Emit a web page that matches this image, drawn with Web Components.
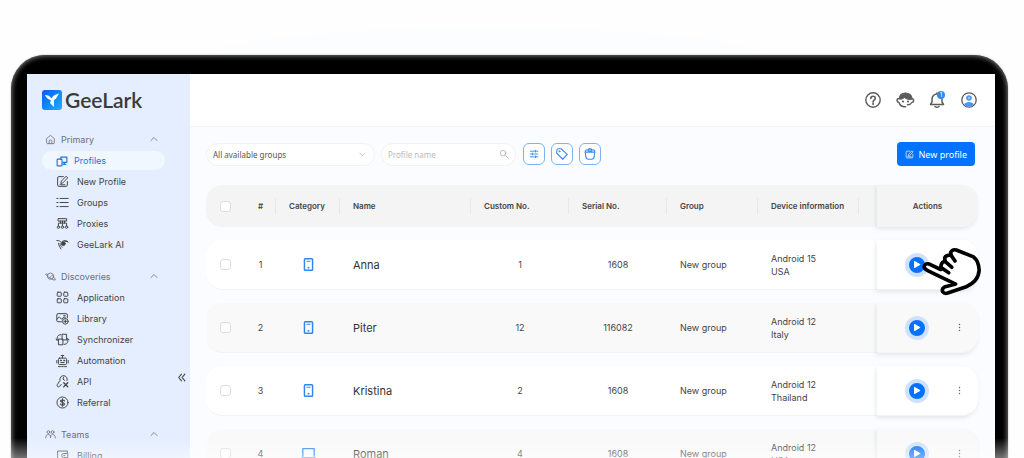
<!DOCTYPE html>
<html lang="en">
<head>
<meta charset="utf-8">
<title>GeeLark</title>
<style>
html, body { margin: 0; height: 100%; }
body { overflow: hidden; background: #fefefe; font-family: Inter, Roboto, sans-serif; font-size: 9px; color: #444; }
</style>
</head>
<body>
<gl-device>
  <gl-sidebar slot="side">
    <gl-section icon="home" label="Primary">
      <gl-link icon="profiles" active>Profiles</gl-link>
      <gl-link icon="edit">New Profile</gl-link>
      <gl-link icon="list">Groups</gl-link>
      <gl-link icon="proxy">Proxies</gl-link>
      <gl-link icon="bird">GeeLark AI</gl-link>
    </gl-section>
    <gl-section icon="planet" label="Discoveries">
      <gl-link icon="grid">Application</gl-link>
      <gl-link icon="library">Library</gl-link>
      <gl-link icon="sync">Synchronizer</gl-link>
      <gl-link icon="robot">Automation</gl-link>
      <gl-link icon="api">API</gl-link>
      <gl-link icon="dollar">Referral</gl-link>
    </gl-section>
    <gl-section icon="team" label="Teams">
      <gl-link icon="wallet">Billing</gl-link>
    </gl-section>
  </gl-sidebar>
  <gl-topbar></gl-topbar>
  <gl-toolbar></gl-toolbar>
  <gl-profiles></gl-profiles>
</gl-device>

<script>
const icons = {
  home: '<path d="M2.5 6.5 8 2l5.500 4.500V13a1 1 0 0 1-1 1h-9a1 1 0 0 1-1-1zM6 14v-3.500a2 2 0 0 1 4 0V14"/>',
  profiles: '<path stroke-width="1.500" d="M6.500 6V2.800h8v7H9M11 10v2.500M9 12.500h4"/><rect stroke-width="1.500" x="1.500" y="5.500" width="6.500" height="9" rx="1"/>',
  edit: '<path d="M9 2H3.500A1.500 1.500 0 0 0 2 3.500v9A1.500 1.500 0 0 0 3.500 14h9a1.500 1.500 0 0 0 1.500-1.500V8M6 10l.5-2.500L12.500 1.500l2 2L8.500 9.500zM5 12h6"/>',
  list: '<path d="M5 3h10M5 8h10M5 13h10M1 3h1.500M1 8h1.500M1 13h1.500"/>',
  proxy: '<path d="M3 2h10v3H3zM8 5v6M3 11V7.500h10V11M5.500 5v2.500M10.500 5v2.500"/><circle cx="3" cy="12.500" r="1.500"/><circle cx="8" cy="12.500" r="1.500"/><circle cx="13" cy="12.500" r="1.500"/>',
  bird: '<path d="M1 3c3 0 4.500 1 5.500 2.500C9 2.500 13 2.500 15 5c-2-1-3.500-1-4.500-.5M3 6.500C3 9 5 11 6 13.500M5 7c0 2 1 3 2.500 4.500"/><circle cx="9" cy="7" r="2.300" fill="currentColor"/>',
  planet: '<circle cx="8" cy="7.500" r="4.500"/><path d="M4 5C0 3 0 5 4 8s9 6 11 5c1-1-1-3-3-4M7 9.500l4-4"/>',
  grid: '<rect x="1.500" y="1.500" width="5" height="5" rx="1"/><rect x="9.500" y="1.500" width="5" height="5" rx="1"/><rect x="1.500" y="9.500" width="5" height="5" rx="1"/><rect x="9.500" y="9.500" width="5" height="5" rx="1"/>',
  library: '<path d="M7 12H2.500A1.500 1.500 0 0 1 1 10.500v-7A1.500 1.500 0 0 1 2.500 2h10A1.500 1.500 0 0 1 14 3.500V7M1 9l3-3 3 3 3-3 2 1.500M9.500 4.500h2"/><circle cx="11.500" cy="11.500" r="3.500"/><path d="M11.500 9.800v3.400M9.800 11.500h3.400"/>',
  sync: '<rect x="8" y="1.500" width="5" height="7"/><rect x="3.500" y="7.500" width="5" height="7"/><path d="M6 2C2 2 1 5 1.500 9L0 7.500M1.500 9 3 7.500M10 14c4 0 5-3 4.500-7L13 8.500M14.500 7 16 8.500"/>',
  robot: '<rect x="3" y="5" width="10" height="8" rx="1.500"/><path d="M8 5V2M6.500 1.800h3M1 8v3M15 8v3M6 10.500h4M3 15.500h2.500M7 15.500h2M10.500 15.500H13"/><circle cx="6" cy="8" r=".7"/><circle cx="10" cy="8" r=".7"/>',
  api: '<path d="M13.500 7A4.500 4.500 0 1 0 5 6.500L1.500 12c-.8 2 1.500 3.500 3 2l2-2.500M9.500 2.500 8.500 5 10.500 6.500"/><path stroke-width="1.600" d="m9.500 9.500 5 5M14.500 9.500l-5 5"/>',
  dollar: '<circle cx="8" cy="8" r="6.800"/><path stroke-width="1.500" d="M10.500 6c-.5-1.500-5-1.500-5 .3S10.500 8 10.500 9.800s-4.500 2-5 .2M8 3.500v9"/>',
  team: '<circle cx="5" cy="4.500" r="2"/><circle cx="11" cy="4.500" r="2"/><path d="M1 13c0-3 1.500-5 4-5s3 2 3 5c0-3 .5-5 3-5s4 2 4 5"/>',
  wallet: '<path d="M14 5V2.500H2v11.500h12v-3M14 5.500H9.500a2.500 2.500 0 0 0 0 5H14z"/><circle cx="10" cy="8" r=".5"/>',
  up: '<path stroke-width="1.600" d="m2 11 6-6 6 6"/>',
  down: '<path stroke-width="1.500" d="m2 5 6 6 6-6"/>',
  collapse: '<path stroke-width="2" d="M8 2 3 8l5 6M14 2 9 8l5 6"/>',
  search: '<circle cx="6.500" cy="6.500" r="4.500"/><path d="m10 10 5 5"/>',
  sliders: '<path stroke-width="1.500" d="M2 3.500h12M2 8h12M2 12.500h12M10.500 2v3M5.500 6.500v3M10.500 11v3"/>',
  tag: '<path stroke-width="1.500" d="M1 3.500Q1 1 3.500 1H7l8 7.500-6 6.500-8-8z"/><circle cx="4.500" cy="4.500" r=".8"/>',
  bucket: '<path stroke-width="1.500" d="M1.500 5.500h13l-1 6.500c-.5 2-1.500 3-3 3h-5c-1.500 0-2.500-1-3-3zM1.500 5.500C1.500 3 4 1.500 5.500 3 6 0 10 0 10.500 3c1.500-1.500 4 0 4 2.500M8 2v3M5.500 3l1.500 2.500M10.500 3 9 5.500"/>',
  help: '<circle cx="8" cy="8" r="7.200" stroke-width="1.400"/><path stroke-width="1.600" d="M5.800 6.500c0-3 4.500-3 4.500-.3 0 1.600-2.200 1.700-2.200 3.500M8.100 11v1.400"/>',
  agent: '<path fill="currentColor" d="M2.500 7C2 3 5 1 8.500 1S15 3 15 7l-1.500.5C11 7.500 9 7 7.500 5 6.500 6.500 5 7.500 2.500 7z"/><path stroke-width="1.500" d="M1.800 6.500C-.8 7-.2 10.500 2 10.500c1 3 3.500 4.500 6.500 4.300M15 6.500c2.500.5 2 4-.2 4-.8 1.500-2 2.300-4.300 2.300"/><circle cx="6" cy="9.500" r=".5"/><circle cx="11" cy="9.500" r=".5"/>',
  bell: '<path stroke-width="1.500" d="M1.500 12.500h13L13 10V7a5 5 0 0 0-10 0v3zM6 14.500q2 1.500 4 0M8 2V1"/>',
  user: '<circle cx="8" cy="8" r="7.200" stroke-width="1.300"/><g fill="#4c98ee" stroke="none"><circle cx="8" cy="6" r="2.800"/><path d="M3 12.500c1.500-3.500 8.500-3.500 10 0-2.500 2.700-7.500 2.700-10 0z"/></g><circle cx="8" cy="6" r=".8" fill="#fff" stroke="none"/>',
  phone: '<rect x="3" y="1" width="10" height="14" rx="1" stroke-width="1.800"/><path d="M6 4h4" stroke-width="1.200"/><path d="M7.500 12h1" stroke-width="1.800"/>',
  laptop: '<path stroke-width="1.700" d="M1 11.500V2h14v9.500M0 13.500h16"/>',
  dots: '<g fill="currentColor" stroke="none"><circle cx="8" cy="2.500" r="1.300"/><circle cx="8" cy="8" r="1.300"/><circle cx="8" cy="13.500" r="1.300"/></g>'
};

function define(name, render) {
  customElements.define(name, class extends HTMLElement {
    constructor() { super(); this.attachShadow({ mode: 'open' }); }
    connectedCallback() { this.shadowRoot.innerHTML = render(this); }
  });
}

define('gl-icon', el => `
<style>
:host { display: inline-block; flex: none; width: var(--size, 13px); height: var(--size, 13px); }
svg { display: block; width: 100%; height: 100%; overflow: visible; }
</style>
<svg viewBox="0 0 16 16" fill="none" stroke="currentColor" stroke-width="1.200" stroke-linecap="round" stroke-linejoin="round" aria-hidden="true">${icons[el.getAttribute('name')]}</svg>`);

define('gl-device', () => `
<style>
:host { display: block; height: 100%; overflow: hidden; position: relative; }
.glow { position: absolute; top: 28px; left: 20%; right: 25%; height: 60px; border-radius: 50% 50% 0 0; background: #fcfdff; }
.bezel { position: relative; margin: 55px 16px 0 11px; padding: 19px 13px 0 16px; background: #000; border-radius: 34px 34px 0 0; box-shadow: inset 0 0 5px 1px #777, 0 0 2px #aaa; }
.screen { display: grid; grid-template-columns: 163px minmax(0, 1fr); background: #fbfcff; }
.fade { position: absolute; left: 0; right: 0; bottom: 0; height: 20px; background: linear-gradient(rgba(254,254,254,0), rgba(254,254,254,.45)); pointer-events: none; }
</style>
<div class="glow"></div>
<div class="bezel"><div class="screen"><slot name="side"></slot><main><slot></slot></main></div></div>
<div class="fade"></div>`);

define('gl-sidebar', () => `
<style>
:host { display: block; background: #e4eeff; }
.logo { display: flex; align-items: center; gap: 3px; height: 20px; padding: 16px 0 18px 15px; color: #3a3a3a; font: 600 21px/20px Lato, sans-serif; }
.logo svg { width: 20px; height: 20px; flex: none; }
.body { display: grid; grid-template-columns: minmax(0, 1fr) 13px; }
nav { display: grid; gap: 10px; padding: 0 14px 30px 15px; }
button { align-self: start; margin-top: 242px; height: 14px; padding: 0; border: 0; background: none; color: #444; --size: 9px; text-align: left; line-height: 0; }
</style>
<div class="logo">
<svg viewBox="0 0 20 20" aria-hidden="true"><defs><linearGradient id="g" x2="1" y2="1"><stop stop-color="#0a5cf5"/><stop offset="1" stop-color="#19b2fb"/></linearGradient></defs><rect width="20" height="20" rx="3" fill="url(#g)"/><path fill="#fff" d="M3 5c3 0 5 1 6.500 3.500C10.500 6 13.500 4 17.500 3.500c-1.500 1-1.500 2-2.500 3.500-.7 1.500-2 2.500-3 3v7l-4-4c1-1.500 1-2.500.5-3C6 9.500 4 7.500 3 5z"/></svg>
<span>GeeLark</span></div>
<div class="body"><nav aria-label="Main"><slot></slot></nav><button aria-label="Collapse sidebar"><gl-icon name="collapse"></gl-icon></button></div>`);

define('gl-section', el => `
<style>
:host { display: block; margin-right: -2px; }
button { display: flex; align-items: center; width: 100%; height: 22px; margin: 0; padding: 0 7px 0 3px; border: 0; background: none; color: #6b7078; font: inherit; font-size: 9px; --size: 11px; }
span { flex: 1; text-align: left; padding-left: 5px; }
.arrow { --size: 8px; }
</style>
<button aria-expanded="true"><gl-icon name="${el.getAttribute('icon')}"></gl-icon><span>${el.getAttribute('label')}</span><gl-icon class="arrow" name="up"></gl-icon></button>
<slot></slot>`);

define('gl-link', el => `
<style>
:host { display: block; height: 19px; padding: 1px 0; }
a { display: flex; align-items: center; gap: 8px; height: 19px; padding-left: 14px; border-radius: 10px; color: #444; text-decoration: none; font-size: 9px; }
:host([active]) a { background: #f0f7ff; color: #2273d8; gap: 6px; --size: 12px; }
</style>
<a href="#"><gl-icon name="${el.getAttribute('icon')}"></gl-icon><span><slot></slot></span></a>`);

define('gl-topbar', () => `
<style>
:host { display: flex; justify-content: flex-end; align-items: center; gap: 16px; height: 52px; padding-right: 18px; background: #fff; border-bottom: 1px solid #f1f3f8; }
button { position: relative; padding: 0; border: 0; background: none; color: #5c5c5c; --size: 16px; line-height: 0; }
i { position: absolute; top: -1px; right: 0; width: 8px; height: 8px; border-radius: 4px; background: #2f8bf5; color: #fff; font: 6px/8px Inter, sans-serif; text-align: center; }
</style>
<button aria-label="Help"><gl-icon name="help"></gl-icon></button>
<button aria-label="Support"><gl-icon name="agent"></gl-icon></button>
<button aria-label="Notifications"><gl-icon name="bell"></gl-icon><i>1</i></button>
<button aria-label="Account"><gl-icon name="user"></gl-icon></button>`);

define('gl-toolbar', () => `
<style>
:host { display: flex; align-items: center; gap: 6px; padding: 15px 20px 6px 16px; }
.field { display: grid; align-items: center; }
.field > * { grid-area: 1 / 1; }
.field gl-icon { justify-self: end; margin-right: 9px; color: #aaa; --size: 7px; pointer-events: none; }
.search gl-icon { --size: 10px; margin-right: 7px; }
select, input { appearance: none; box-sizing: border-box; height: 23px; margin: 0; padding: 0 6px; border: 1px solid #f0f2f6; border-radius: 12px; background: #fff; color: #555; font: 8px "Noto Sans", sans-serif; }
select { width: 169px; }
input { width: 135px; }
input::placeholder { color: #bbb; opacity: 1; }
.tools { display: flex; gap: 6px; padding-left: 1px; }
.tool { display: grid; place-items: center; width: 22px; height: 22px; padding: 0; border: 1px solid #7bb2f3; border-radius: 6px; background: #fff; color: #3b8df0; --size: 12px; }
.tool:first-child { --size: 10px; }
.new { display: flex; align-items: center; gap: 5px; height: 24px; margin-left: auto; padding: 0 8px; border: 0; border-radius: 4px; background: #0372ff; color: #fff; font: 9px "Noto Sans", sans-serif; --size: 9px; }
</style>
<div class="field"><select aria-label="Group"><option>All available groups</option></select><gl-icon name="down"></gl-icon></div>
<div class="field search"><input type="text" aria-label="Profile name" placeholder="Profile name"><gl-icon name="search"></gl-icon></div>
<div class="tools">
<button class="tool" aria-label="Filters"><gl-icon name="sliders"></gl-icon></button>
<button class="tool" aria-label="Tags"><gl-icon name="tag"></gl-icon></button>
<button class="tool" aria-label="Recycle bin"><gl-icon name="bucket"></gl-icon></button>
</div>
<button class="new"><gl-icon name="edit"></gl-icon>New profile</button>`);

define('gl-play', () => `
<style>
:host { display: block; }
button { display: grid; place-items: center; width: 24px; height: 24px; padding: 0; border: 4px solid #cfe2fd; border-radius: 50%; background: #0372ff; }
svg { display: block; width: 7px; height: 7px; margin-left: 1px; }
</style>
<button aria-label="Start"><svg viewBox="0 0 8 8" fill="#fff" aria-hidden="true"><path d="M0 0.500Q0-.3.8.1L6.800 3.500q.7.500 0 1L.8 7.900Q0 8.300 0 7.500z"/></svg></button>`);

define('gl-pointer', () => `
<style>
:host { display: block; width: 60px; height: 49px; pointer-events: none; }
svg { display: block; width: 100%; height: 100%; }
</style>
<svg viewBox="83 34 180 148" fill="#fff" stroke="#000" stroke-width="11" stroke-linejoin="round" stroke-linecap="round" aria-hidden="true">
<path d="M139 102 103 85Q90 83 89 93q0 8 12 13L184 146 150 155q-9 5-5 14 5 7 15 4L216 154Q253 138 255 104 254 76 238 64L186 43Q174 40 169 50l1 9q-13-3-19 7l1 11q-10 2-12 12z"/>
<path fill="none" d="m141 97 22 15M151 77l21 18M169 57l13 19"/></svg>`);

const profiles = [
  ['1', 'phone', 'Anna', '1', '1608', 'New group', 'Android 15', 'USA'],
  ['2', 'phone', 'Piter', '12', '116082', 'New group', 'Android 12', 'Italy'],
  ['3', 'phone', 'Kristina', '2', '1608', 'New group', 'Android 12', 'Thailand'],
  ['4', 'laptop', 'Roman', '4', '1608', 'New group', 'Android 12', 'USA']
];

define('gl-profiles', () => `
<style>
:host { display: block; padding: 0 17px 40px 16px; }
table { width: 100%; table-layout: fixed; border-collapse: separate; border-spacing: 0 13px; }
th, td { box-sizing: border-box; padding: 0; text-align: center; }
th { height: 42px; background: #f4f4f4; color: #444; font-size: 8px; font-weight: 600; }
td { height: 50px; background: #fff; line-height: 13px; border-bottom: 1px solid #f2f3f5; }
tr:nth-child(even) td { background: #f9f9f9; }
.left { text-align: left; padding-left: 13px; white-space: nowrap; }
.rule { background: linear-gradient(#e8e8e8, #e8e8e8) right center / 1px 16px no-repeat #f4f4f4; }
th:first-child, td:first-child { border-radius: 16px 0 0 16px; }
th:last-child, td:last-child { border-radius: 0 16px 16px 0; box-shadow: -1px 2px 4px rgba(60,70,90,.12); position: relative; }
.name { font-size: 11px; color: #333; padding-top: 2px; }
.cat { color: #2f86ee; --size: 13px; line-height: 0; }
input { appearance: none; display: block; box-sizing: border-box; width: 11px; height: 11px; margin: 0 auto; border: 1px solid #ddd; border-radius: 3px; background: #fff; }
.acts { display: flex; align-items: center; gap: 20px; padding-left: 28px; }
.more { padding: 0; width: 20px; height: 20px; display: grid; place-items: center; border: 0; background: none; color: #666; --size: 9px; }
gl-pointer { position: absolute; left: 45px; top: 7px; z-index: 1; }
</style>
<table>
<colgroup><col style="width:39px"><col style="width:31px"><col style="width:64px"><col><col style="width:98px"><col style="width:98px"><col style="width:91px"><col style="width:101px"><col style="width:18px"><col style="width:101px"></colgroup>
<thead><tr><th><input type="checkbox" aria-label="Select all"></th><th class="rule">#</th><th class="left rule">Category</th><th class="left rule">Name</th><th class="left rule">Custom No.</th><th class="left rule">Serial No.</th><th class="left rule">Group</th><th class="left rule">Device information</th><th></th><th>Actions</th></tr></thead>
<tbody>${profiles.map((p, i) => `<tr><td><input type="checkbox" aria-label="Select ${p[2]}"></td><td>${p[0]}</td><td class="cat"><gl-icon name="${p[1]}"></gl-icon></td><td class="left name">${p[2]}</td><td>${p[3]}</td><td>${p[4]}</td><td class="left">${p[5]}</td><td class="left">${p[6]}<br>${p[7]}</td><td></td><td><div class="acts"><gl-play></gl-play>${i ? '<button class="more" aria-label="More"><gl-icon name="dots"></gl-icon></button>' : '<gl-pointer></gl-pointer>'}</div></td></tr>`).join('')}</tbody>
</table>`);
</script>
</body>
</html>
